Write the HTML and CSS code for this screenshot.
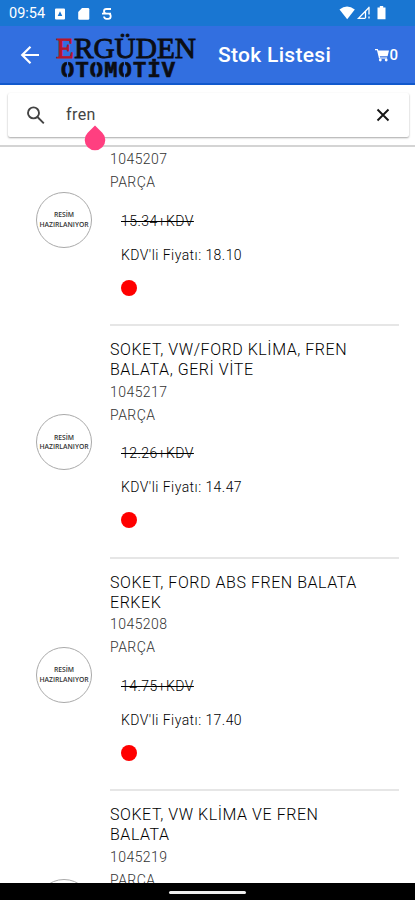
FILE: index.html
```html
<!DOCTYPE html>
<html lang="tr">
<head>
<meta charset="utf-8">
<title>Stok Listesi</title>
<link rel="stylesheet" href="styles.css">
</head>
<body>
<div class="phone">
  <div class="status">
    <span class="clock">09:54</span>
    <svg class="status-left" width="62" height="16" viewBox="0 0 62 16">
      <path fill="#fff" fill-rule="evenodd" d="M2 2.500h8q1 0 1 1v9q0 1-1 1h-8q-1 0-1-1v-9q0-1 1-1zM6 5.300l-2.300 4.700h4.600z"/>
      <path fill="#fff" d="M28 2h6q1.300 0 1.300 1.300v9.200q0 1.300-1.300 1.300h-8.500q-1.300 0-1.300-1.300v-6.500z"/>
      <path fill="none" stroke="#fff" stroke-width="1.800" d="M57 3h-4.500q-2.500 0-2.500 2.300t2.500 2.300h4.500M48 7.600h6.500q2.200 0 2.200 2.600t-2.500 2.600h-1.700q-2.300 0-2.500-2.300"/>
    </svg>
    <svg class="status-right" width="50" height="16" viewBox="0 0 50 16">
      <path fill="#fff" d="M.5 4.500Q8 -1.500 15.800 4.500L8.200 14.200z"/>
      <path fill="none" stroke="#fff" stroke-width="1.300" d="M30 2.500L19.500 13.300H26.500M30 1.800V9.500M26.500 6v7M30 11.500v2"/>
      <path fill="#fff" d="M38.500 2.500h2.300V1h3.400v1.500h2.300v11.700h-8z"/>
    </svg>
  </div>
  <header class="bar">
    <svg class="back" width="20" height="20" viewBox="0 0 20 20" fill="none" stroke="#fff" stroke-width="2.200"><path d="M19 10H2.500M10.500 1.700L2.200 10l8.300 8.300"/></svg>
    <svg class="logo" width="144" height="50" viewBox="0 0 144 50">
      <text class="logo-top" x="1" y="26.500" textLength="140" lengthAdjust="spacingAndGlyphs"><tspan class="logo-red">E</tspan>RGÜDEN</text>
      <text class="logo-bottom" x="6" y="46" textLength="114" lengthAdjust="spacing">OTOMOTİV</text>
      <path stroke="#326fe0" stroke-width="1.200" d="M12.500 30v18M41 30v18M69.500 30v18"/>
    </svg>
    <h1 class="heading">Stok Listesi</h1>
    <div class="cart">
      <svg width="14" height="14" viewBox="0 0 14 14"><path fill="#fff" d="M0 1h2.800l.5 1.600H14l-1.400 5.700H4.800l.3 1.100h7v1.100H4L2 2.300H0z"/><circle cx="5.300" cy="12" r="1.400" fill="#fff"/><circle cx="11.200" cy="12" r="1.400" fill="#fff"/></svg>
      <span>0</span>
    </div>
  </header>
  <div class="search-area">
    <div class="search">
      <svg class="glass" width="20" height="20" viewBox="0 0 20 20" fill="none" stroke="#444" stroke-width="1.900"><circle cx="6.500" cy="7.900" r="5.500"/><path d="M10.500 12l6.300 6.300"/></svg>
      <span class="query">fren</span>
      <svg class="clear" width="14" height="14" viewBox="0 0 14 14" stroke="#161616" stroke-width="1.900"><path d="M1.500 1.500l11 11m0-11l-11 11"/></svg>
    </div>
    <svg class="handle" width="22" height="26" viewBox="0 0 22 26"><path fill="#ff3f80" d="M11 .5l7.300 7.200a10.300 10.300 0 1 1-14.600 0z"/></svg>
  </div>
  <main class="list">
    <article class="item item-cut">
      <div class="thumb"><span>RESİM</span><span>HAZIRLANIYOR</span></div>
      <div class="info">
        <p class="meta">1045207</p><p class="meta unit">PARÇA</p>
        <p class="old">15.34+KDV</p><p class="price">KDV'li Fiyatı: 18.10</p><i class="dot"></i>
      </div>
    </article>
    <article class="item">
      <div class="thumb"><span>RESİM</span><span>HAZIRLANIYOR</span></div>
      <div class="info">
        <h2 class="name">SOKET, VW/FORD KLİMA, FREN<br>BALATA, GERİ VİTE</h2>
        <p class="meta">1045217</p><p class="meta unit">PARÇA</p>
        <p class="old">12.26+KDV</p><p class="price">KDV'li Fiyatı: 14.47</p><i class="dot"></i>
      </div>
    </article>
    <article class="item">
      <div class="thumb"><span>RESİM</span><span>HAZIRLANIYOR</span></div>
      <div class="info">
        <h2 class="name">SOKET, FORD ABS FREN BALATA<br>ERKEK</h2>
        <p class="meta">1045208</p><p class="meta unit">PARÇA</p>
        <p class="old">14.75+KDV</p><p class="price">KDV'li Fiyatı: 17.40</p><i class="dot"></i>
      </div>
    </article>
    <article class="item">
      <div class="thumb"></div>
      <div class="info">
        <h2 class="name">SOKET, VW KLİMA VE FREN<br>BALATA</h2>
        <p class="meta">1045219</p><p class="meta unit">PARÇA</p>
      </div>
    </article>
  </main>
  <div class="nav"><div class="pill"></div></div>
</div>
</body>
</html>
```
FILE: styles.css
```css
* { box-sizing: border-box; }
body { margin: 0; background: #fff; font-family: Roboto, sans-serif; overflow: hidden; }
h1, h2, p { margin: 0; font-weight: 400; white-space: nowrap; }
svg { display: block; flex: none; }
.phone { width: 415px; height: 900px; display: flex; flex-direction: column; overflow: hidden; }

.status { height: 26px; flex: none; display: flex; align-items: center; background: #1976d2; color: #fff; padding: 0 26px 0 9px; }
.clock { width: 45px; font-size: 14.5px; line-height: 26px; padding-top: 2px; }
.status-left { margin-top: 1px; }
.status-right { margin-left: auto; }

.bar { height: 59px; flex: none; display: flex; align-items: center; background: #326fe0; border-bottom: 2px solid #1259cc; color: #fff; padding: 0 17px 0 20px; }
.back { margin-top: 1px; }
.logo { margin: 3px 0 0 15px; overflow: visible; }
.logo-top { font-family: "Liberation Serif", serif; font-size: 30px; fill: #0b0d14; stroke: #0b0d14; stroke-width: .9px; }
.logo-red { fill: #b5152b; stroke: #b5152b; }
.logo-bottom { font-family: "Liberation Mono", monospace; font-weight: 700; font-size: 22px; fill: #0b0d14; stroke: #0b0d14; stroke-width: .7px; }
.heading { margin: 0 0 0 19px; font-size: 21px; font-weight: 500; letter-spacing: .3px; width: 114px; }
.cart { margin-left: auto; display: flex; align-items: center; font-size: 15px; font-weight: 500; }

.search-area { position: relative; height: 62px; flex: none; padding: 8px 6px 0 8px; border-bottom: 2px solid #d4d4d4; }
.search { height: 44px; display: flex; align-items: center; background: #fff; padding: 0 19px; border-radius: 2px; box-shadow: 0 1px 2px rgba(0, 0, 0, .35); }
.query { margin: -2px 0 0 19px; font-size: 16px; letter-spacing: .4px; color: #444; }
.clear { margin-left: auto; }
.handle { position: absolute; left: 84px; top: 40px; }

.list { flex: 1; overflow: hidden; }
.item { height: 232.500px; display: flex; align-items: center; padding: 0 16px 0 36px; }
.item-cut { height: 179px; }
.item-cut .thumb { margin-top: -34px; }
.item-cut .info { padding-top: 1px; }
.thumb { width: 56px; height: 56px; flex: none; border: 1px solid #aaa; border-radius: 50%; display: flex; flex-direction: column; align-items: center; justify-content: center; font: 600 6.800px/9.500px "Open Sans", sans-serif; color: #333; }
.info { width: 289px; height: 100%; margin-left: 18px; padding-top: 14px; border-bottom: 2px solid #e6e6e6; }
.name { font-size: 16px; line-height: 20px; letter-spacing: .55px; font-weight: 300; color: #000; }
.meta { font-size: 14px; line-height: 23px; height: 23px; letter-spacing: .45px; font-weight: 300; color: #333; }
.name + .meta { margin-top: .5px; }
.old { margin: 15.500px 0 0 11px; font-size: 14px; line-height: 22px; letter-spacing: .45px; font-weight: 300; color: #000; text-decoration: line-through; }
.price { margin: 12px 0 0 11px; font-size: 14px; line-height: 22px; letter-spacing: .45px; font-weight: 300; color: #000; }
.dot { display: block; width: 16px; height: 16px; margin: 14px 0 0 11px; border-radius: 50%; background: #f00; }

.nav { height: 17px; flex: none; background: #000; display: flex; justify-content: center; padding-top: 8px; }
.pill { width: 77px; height: 3px; border-radius: 2px; background: #eee; }
```
